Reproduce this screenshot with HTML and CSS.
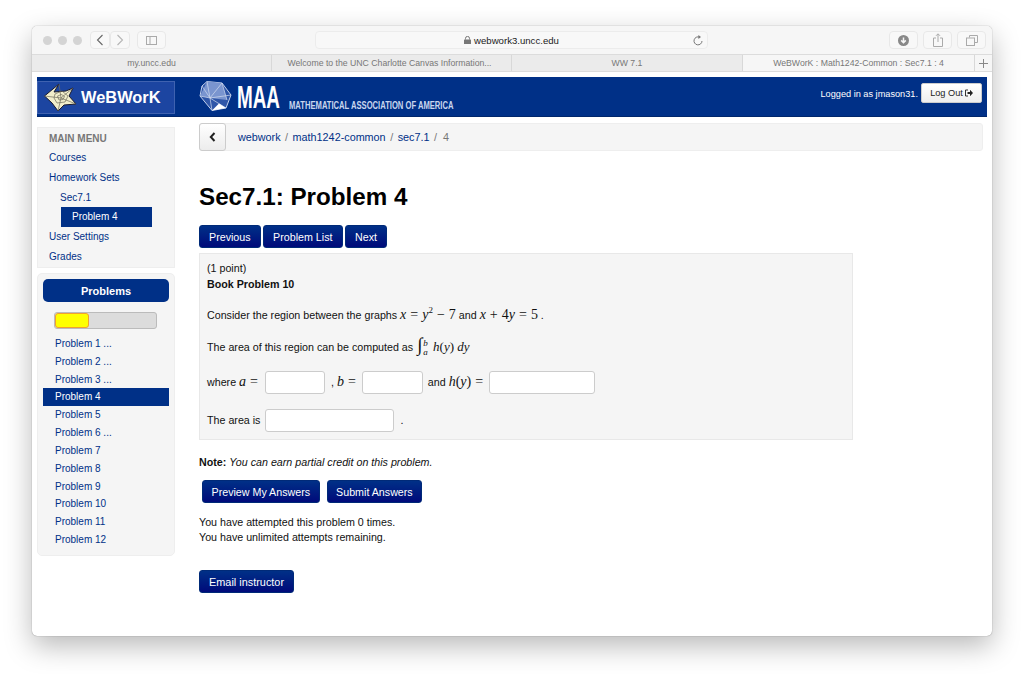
FILE: index.html
```html
<!DOCTYPE html>
<html lang="en">
<head>
<meta charset="utf-8">
<title>WeBWorK : Math1242-Common : Sec7.1 : 4</title>
<link rel="stylesheet" href="styles.css">
</head>
<body>
<div class="window">
  <div class="toolbar">
    <div class="lights"><i></i><i></i><i></i></div>
    <div class="tool-group">
      <span class="tool tool-nav"><svg width="8" height="12" viewBox="0 0 8 12"><path d="M6.500 1L1.500 6l5 5" fill="none" stroke="#666" stroke-width="1.100"/></svg></span><span class="tool tool-nav"><svg width="8" height="12" viewBox="0 0 8 12"><path d="M1.500 1l5 5-5 5" fill="none" stroke="#b5b5b5" stroke-width="1.100"/></svg></span>
    </div>
    <span class="tool tool-side"><svg width="11" height="9" viewBox="0 0 11 9"><rect x=".5" y=".5" width="10" height="8" fill="none" stroke="#aaa"/><path d="M4 .5v8" stroke="#aaa"/></svg></span>
    <div class="address">
      <span class="url"><svg class="lock" width="7" height="8" viewBox="0 0 7 8"><path d="M1.500 3.500V2.400a2 2 0 0 1 4 0v1.100" fill="none" stroke="#777"/><rect y="3.400" width="7" height="4.600" rx=".5" fill="#777"/></svg>webwork3.uncc.edu</span>
      <svg class="reload" width="10" height="11" viewBox="0 0 10 11"><path d="M6.600 2.200a4 4 0 1 0 2.400 3.800" fill="none" stroke="#777"/><path d="M5.400 0l2.600 2.100-2.600 2z" fill="#777"/></svg>
    </div>
    <span class="tool tool-right tool-first"><svg width="11" height="11" viewBox="0 0 11 11"><circle cx="5.500" cy="5.500" r="5.500" fill="#888"/><path d="M5.500 2.500v5M3.200 5.400l2.300 2.300 2.300-2.300" fill="none" stroke="#f6f6f6" stroke-width="1.500"/></svg></span>
    <span class="tool tool-right"><svg width="10" height="14" viewBox="0 0 10 14"><path d="M3 5H.5v8.500h9V5H7M5 9V1M3 2.800L5 .8l2 2" fill="none" stroke="#aaa"/></svg></span>
    <span class="tool tool-right"><svg width="12" height="11" viewBox="0 0 12 11"><path d="M3.500 2.500V.5h8v7H9" fill="none" stroke="#aaa"/><rect x=".5" y="3" width="8" height="7.500" fill="none" stroke="#aaa"/></svg></span>
  </div>
  <div class="tabs">
    <span class="tab tab-1">my.uncc.edu</span>
    <span class="tab tab-2">Welcome to the UNC Charlotte Canvas Information...</span>
    <span class="tab tab-3">WW 7.1</span>
    <span class="tab tab-active">WeBWorK : Math1242-Common : Sec7.1 : 4</span>
    <span class="tab-plus"><svg width="9" height="9" viewBox="0 0 9 9"><path d="M4.500 0v9M0 4.500h9" stroke="#888"/></svg></span>
  </div>
  <div class="page">
    <header class="site-header">
      <a class="brand">
        <svg class="star" width="33" height="30" viewBox="0 0 33 30"><path d="M.5 13L15 1l-5 8 12-1 7-3-4 8 7 8-12 1-6 6-6-8z" fill="#f1eecb" stroke="#1b1b2e" stroke-width="1" stroke-linejoin="round"/><path d="M15 1L17 15M29 5L17 15M32 21L17 15M14 28L17 15M.5 13L17 15M11 11l7-3 6 5-3 6-8 1-3-5zM13.500 13l4-1.500 3 2-1.500 3-4 .5z" fill="none" stroke="#6e6c5c" stroke-width=".7"/></svg>
        <span>WeBWorK</span>
      </a>
      <div class="maa">
        <svg class="poly" width="34" height="30" viewBox="0 0 34 30"><path d="M9 0.500L24 2l9 12-5 13-14 2.500L2 15 4 5z" fill="#2f56a8" stroke="#c3d0ea" stroke-width="1"/><path d="M9 .5L2 15l10 2L24 2zM12 17l12-15 5 17z" fill="#7a95cf"/><path d="M9 .5l3 16.500L24 2M4 5l8 12-10-2M12 17l21-3M12 17l16 10M12 17l2 12.500M24 2l5 17" fill="none" stroke="#d3dcef" stroke-width=".7"/><path d="M14 29.500l7-7 7 4.500z" fill="#fff"/></svg>
        <span class="maa-mark"><span>MAA</span></span>
        <span class="maa-name"><span>MATHEMATICAL ASSOCIATION OF AMERICA</span></span>
      </div>
      <div class="login">
        <span class="login-text">Logged in as jmason31.</span>
        <a class="logout">Log Out <svg width="8" height="8" viewBox="0 0 8 8"><path d="M3 1H.5v6H3" fill="none" stroke="#333"/><path d="M2.500 3h2.500V.8L8 4 5 7.200V5H2.500z" fill="#222"/></svg></a>
      </div>
    </header>
    <div class="layout">
      <aside class="sidebar">
        <nav class="menu">
          <div class="menu-title">MAIN MENU</div>
          <a class="menu-item">Courses</a>
          <a class="menu-item">Homework Sets</a>
          <a class="menu-item menu-sub">Sec7.1</a>
          <a class="menu-item menu-current">Problem 4</a>
          <a class="menu-item">User Settings</a>
          <a class="menu-item">Grades</a>
        </nav>
        <div class="problems">
          <div class="problems-title">Problems</div>
          <div class="progress"><div class="progress-fill"></div></div>
          <a class="prob">Problem 1 ...</a>
          <a class="prob">Problem 2 ...</a>
          <a class="prob">Problem 3 ...</a>
          <a class="prob prob-current">Problem 4</a>
          <a class="prob">Problem 5</a>
          <a class="prob">Problem 6 ...</a>
          <a class="prob">Problem 7</a>
          <a class="prob">Problem 8</a>
          <a class="prob">Problem 9</a>
          <a class="prob">Problem 10</a>
          <a class="prob">Problem 11</a>
          <a class="prob">Problem 12</a>
        </div>
      </aside>
      <main class="content">
        <div class="crumbs">
          <span class="back"><svg width="7" height="10" viewBox="0 0 7 10"><path d="M5.500 1L1.800 5l3.700 4" fill="none" stroke="#222" stroke-width="2"/></svg></span>
          <div class="trail"><a>webwork</a> <b>/</b> <a>math1242-common</a> <b>/</b> <a>sec7.1</a> <b>/</b> <b>4</b></div>
        </div>
        <h1>Sec7.1: Problem 4</h1>
        <div class="btn-row">
          <a class="btn">Previous</a>
          <a class="btn">Problem List</a>
          <a class="btn">Next</a>
        </div>
        <section class="problem">
          <div class="line-top">(1 point)</div>
          <div class="line-top"><strong>Book Problem 10</strong></div>
          <p class="q q-1">Consider the region between the graphs <span class="m"><i>x</i> = <i>y</i><sup>2</sup> − 7</span> and <span class="m"><i>x</i> + 4<i>y</i> = 5</span> .</p>
          <p class="q q-2">The area of this region can be computed as <span class="m m-int"><span class="int">∫</span><span class="limits"><i>b</i><i>a</i></span> <i>h</i>(<i>y</i>) <i>dy</i></span></p>
          <div class="q-row q-3"><span class="where">where <span class="m"><i>a</i> =</span></span> <input class="ans ans-a" type="text"> <span>, <span class="m"><i>b</i> =</span></span> <input class="ans ans-s" type="text"> <span class="and">and <span class="m"><i>h</i>(<i>y</i>) =</span></span> <input class="ans ans-l" type="text"></div>
          <div class="q-row q-4">The area is <input class="ans ans-m" type="text"> <span class="dot">.</span></div>
        </section>
        <p class="note"><strong>Note:</strong> <em>You can earn partial credit on this problem.</em></p>
        <div class="btn-row submit-row">
          <a class="btn">Preview My Answers</a>
          <a class="btn">Submit Answers</a>
        </div>
        <p class="attempts">You have attempted this problem 0 times.<br>You have unlimited attempts remaining.</p>
        <a class="btn email">Email instructor</a>
      </main>
    </div>
  </div>
</div>
</body>
</html>
```
FILE: styles.css
```css
* { box-sizing: border-box; }
html, body { margin: 0; height: 100%; }
body {
  background: #fff;
  padding: 26px 32px 0;
  font-family: "Liberation Sans", Arial, sans-serif;
  font-size: 10.700px;
  color: #111;
  overflow: hidden;
}
a { color: #003087; }
.window {
  width: 960px;
  height: 610px;
  border-radius: 5px;
  background: #fff;
  overflow: hidden;
  box-shadow: 0 0 1px rgba(0,0,0,.55), 0 10px 28px rgba(0,0,0,.28);
}
.toolbar {
  height: 29px;
  background: #f6f6f6;
  border-bottom: 1px solid #dcdcdc;
  display: flex;
  align-items: center;
  padding: 0 6px 0 11px;
}
.lights { display: flex; gap: 6px; width: 47px; flex: none; }
.lights i { width: 9px; height: 9px; border-radius: 50%; background: #d4d4d4; }
.tool-group { display: flex; margin-right: 7px; flex: none; }
.tool {
  height: 18px;
  border: 1px solid #e8e8e8;
  background: #f8f8f8;
  border-radius: 4px;
  display: flex;
  align-items: center;
  justify-content: center;
  flex: none;
}
.tool-nav { width: 20px; }
.tool-side { width: 29px; }
.address {
  width: 393px;
  height: 18px;
  margin-left: 149px;
  margin-right: 181px;
  border: 1px solid #ececec;
  border-radius: 4px;
  background: #f8f8f8;
  display: flex;
  align-items: center;
  justify-content: center;
  position: relative;
  flex: none;
}
.url { font-size: 9.600px; color: #222; display: flex; align-items: center; gap: 3px; }
.lock { display: block; }
.reload { position: absolute; right: 4px; top: 3px; }
.tool-right { width: 29px; margin-left: 5px; }
.tool-first { margin-left: 0; }
.tabs {
  height: 17px;
  display: flex;
  background: #ebebeb;
  border-bottom: 1px solid #dcdcdc;
  font-size: 8.700px;
  color: #777;
}
.tab {
  display: flex;
  align-items: center;
  justify-content: center;
  border-right: 1px solid #d8d8d8;
}
.tab-1 { width: 240px; }
.tab-2 { width: 240px; padding-right: 4px; }
.tab-3 { width: 231px; }
.tab-active { width: 232px; background: #f6f6f6; }
.tab-plus { flex: 1; background: #f6f6f6; display: flex; align-items: center; justify-content: center; }
.page { padding: 5px 5px 0; }
.site-header {
  height: 40px;
  background: #003087;
  border-bottom: 1px solid #00266b;
  display: flex;
  align-items: flex-start;
  color: #fff;
}
.brand {
  width: 138px;
  height: 33px;
  margin-top: 4px;
  background: #1c45a1;
  border: 1px solid #3f62b0;
  color: #fff;
  display: flex;
  align-items: center;
  padding-left: 6px;
  gap: 4px;
  font-size: 16.400px;
  font-weight: bold;
}
.star { display: block; flex: none; }
.maa { display: flex; align-items: flex-start; margin-left: 23px; height: 37px; padding-top: 4px; }
.poly { display: block; flex: none; }
.maa-mark { width: 45px; margin-left: 5px; margin-top: 1px; height: 30px; line-height: 30px; flex: none; }
.maa-mark span {
  display: inline-block;
  font-size: 32px;
  font-weight: bold;
  white-space: nowrap;
  transform: scaleX(.59);
  transform-origin: left center;
}
.maa-name { width: 164px; margin-left: 7px; margin-top: 17px; line-height: 14px; flex: none; }
.maa-name span {
  display: inline-block;
  font-size: 11px;
  font-weight: bold;
  color: #c9d6ee;
  white-space: nowrap;
  transform: scaleX(.693);
  transform-origin: left center;
}
.login {
  margin-left: auto;
  margin-right: 5px;
  margin-top: 6px;
  display: flex;
  align-items: center;
  gap: 3px;
  font-size: 9.200px;
}
.login-text { padding-top: 1px; }
.logout {
  height: 20px;
  width: 61px;
  background: linear-gradient(#fff, #eee);
  border: 1px solid #ccc;
  border-radius: 2px;
  color: #222;
  display: flex;
  align-items: center;
  justify-content: center;
  gap: 2px;
}
.layout { display: flex; }
.sidebar { width: 138px; margin-right: 24px; padding-top: 10px; font-size: 10px; }
.menu {
  height: 141px;
  background: #f5f5f5;
  border: 1px solid #eee;
  padding: 1px 0 0 11px;
  margin-bottom: 5px;
}
.menu-title { font-weight: bold; color: #777; line-height: 19px; }
.menu-item { display: block; line-height: 19.800px; }
.menu-sub { margin-left: 11px; }
.menu-current {
  margin-left: 12px;
  width: 91px;
  padding-left: 11px;
  background: #003087;
  color: #fff;
}
.problems {
  height: 283px;
  background: #f5f5f5;
  border: 1px solid #eee;
  border-radius: 5px;
  padding: 5px 5px 0;
}
.problems-title {
  height: 23px;
  background: #003087;
  border-radius: 5px;
  color: #fff;
  font-weight: bold;
  font-size: 11px;
  display: flex;
  align-items: center;
  justify-content: center;
}
.progress {
  width: 103px;
  height: 17px;
  margin: 10px 0 6px 11px;
  background: #dcdcdc;
  border: 1px solid #bbb;
  border-radius: 3px;
}
.progress-fill {
  width: 34px;
  height: 100%;
  background: #ff0;
  border: 1px solid #f0a030;
  border-radius: 3px;
}
.prob { display: block; padding-left: 12px; line-height: 17.820px; }
.prob-current { background: #003087; color: #fff; }
.content { flex: 1; padding-top: 6px; }
.crumbs {
  height: 28px;
  width: 784px;
  background: #f5f5f5;
  border: 1px solid #eee;
  border-radius: 3px;
  display: flex;
  align-items: center;
  font-size: 10.800px;
}
.back {
  width: 27px;
  height: 28px;
  margin: 0 12px 0 -1px;
  background: linear-gradient(#fff, #ececec);
  border: 1px solid #ccc;
  border-radius: 3px;
  display: flex;
  align-items: center;
  justify-content: center;
}
.back svg { display: block; }
.trail b { font-weight: normal; color: #777; margin: 0 1.500px; }
h1 {
  font-size: 24.200px;
  line-height: 30px;
  margin: 31px 0 13px;
  color: #000;
}
.btn-row { display: flex; gap: 2.500px; font-size: 10.700px; }
.btn {
  height: 23px;
  padding: 0 9px;
  display: inline-flex;
  align-items: center;
  background: linear-gradient(#003087, #000a7a);
  border: 1px solid #002a78;
  border-radius: 3px;
  color: #fff;
}
.problem {
  width: 654px;
  height: 187px;
  margin-top: 5px;
  padding: 6px 7px 0;
  background: #f5f5f5;
  border: 1px solid #e8e8e8;
}
.line-top { line-height: 16px; }
.q { margin: 0; }
.q-1 { margin-top: 15px; line-height: 17px; }
.q-2 { margin-top: 13px; line-height: 20px; height: 20px; }
.m { font-family: "Liberation Serif", serif; font-size: 14px; line-height: 0; word-spacing: .5px; }
.m sup { font-size: 9px; line-height: 0; }
.m-int { font-size: 13px; word-spacing: 0; }
.int { font-size: 19px; line-height: 0; margin-left: 1px; }
.limits { display: inline-flex; flex-direction: column; font-size: 9px; line-height: 9px; vertical-align: middle; margin-left: 1px; margin-right: 2px; }
.q-row { display: flex; align-items: center; height: 24px; gap: 6px; }
.q-3 { margin-top: 13px; }
.q-4 { margin-top: 14px; gap: 5px; }
.where { margin-right: 1px; }
.and { margin-left: -1px; }
.dot { margin-left: 1px; }
.ans {
  height: 23px;
  background: #fff;
  border: 1px solid #ccc;
  border-radius: 3px;
  padding: 0;
  margin: 0;
}
.ans-a { width: 60px; }
.ans-s { width: 61px; }
.ans-l { width: 106px; }
.ans-m { width: 129px; }
.note { margin: 15px 0 0; line-height: 15px; }
.submit-row { margin: 10px 0 0 3px; gap: 7px; font-size: 10.700px; }
.submit-row .btn { padding: 0 8.500px; }
.attempts { margin: 12px 0 0; line-height: 15px; }
.email { margin-top: 25px; font-size: 10.900px; }
```
